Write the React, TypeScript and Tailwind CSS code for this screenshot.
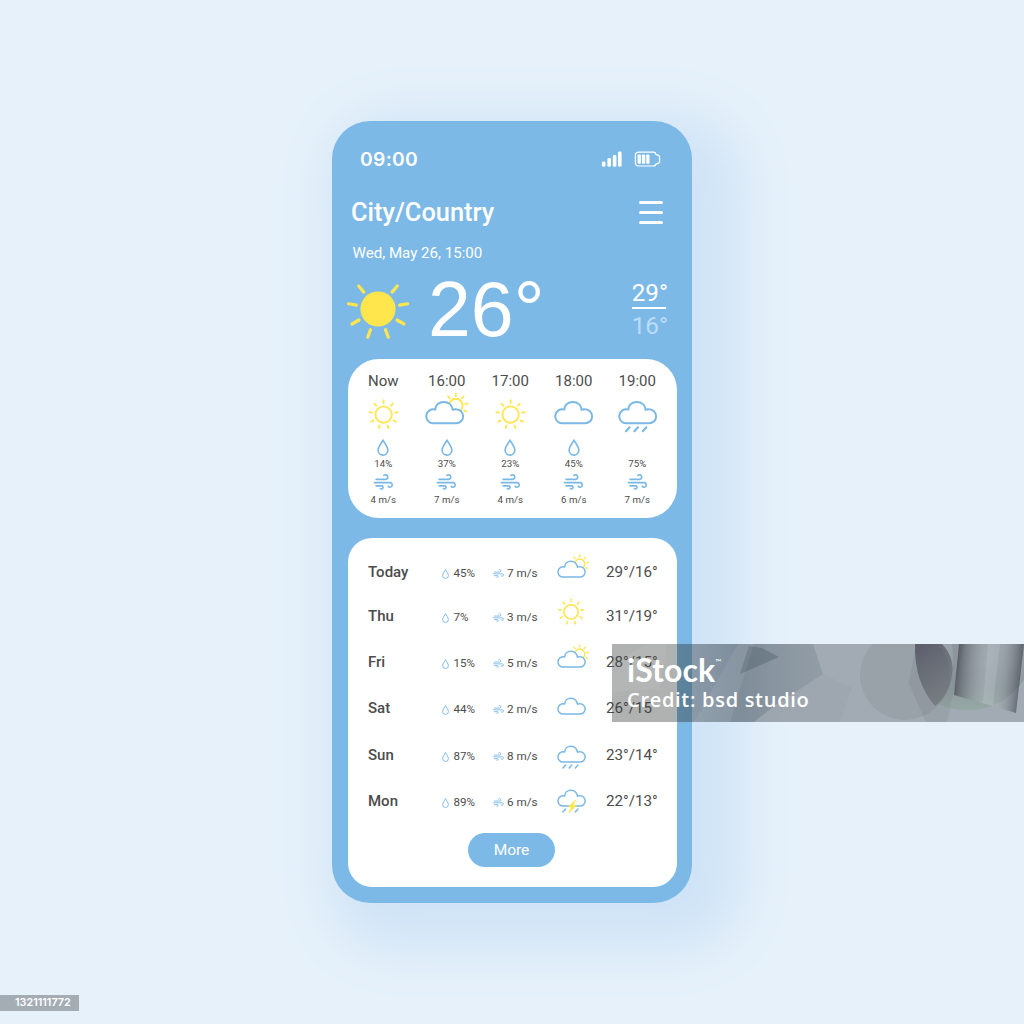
import React from "react";

const BLUE = "#7ab8e6";
const YELLOW = "#ffe64d";

type Weather = "sun" | "partly" | "cloud" | "rain" | "storm";

const CLOUD =
  "M8.6 23.3A7 7 0 1 1 10.3 9.6C10.4 5 14 1.9 18.9 1.9C23.6 1.9 27.4 5.2 27.6 9.8C28.8 9.2 30 9.2 31.2 9.3A7 7 0 0 1 31 23.3Z";

function Rays({ cx, cy, from, to, width, skipTop = false }: { cx: number; cy: number; from: number; to: number; width: number; skipTop?: boolean }) {
  const angles = [0, 40, 80, 120, 160, 200, 240, 280, 320].filter((a) => !(skipTop && a === 0));
  return (
    <g stroke={YELLOW} strokeWidth={width} strokeLinecap="round">
      {angles.map((a) => (
        <line key={a} x1={cx} y1={cy - from} x2={cx} y2={cy - to} transform={`rotate(${a} ${cx} ${cy})`} />
      ))}
    </g>
  );
}

function WeatherIcon({ type, className }: { type: Weather; className: string }) {
  return (
    <svg viewBox="0 -8 46 42" className={className} fill="none" strokeLinecap="round" strokeLinejoin="round">
      {type === "sun" && (
        <>
          <circle cx="19.6" cy="14.6" r="8.2" stroke={YELLOW} strokeWidth="1.9" />
          <Rays cx={19.6} cy={14.6} from={11.6} to={14.4} width={1.8} />
        </>
      )}
      {type === "partly" && (
        <>
          <circle cx="30.8" cy="5.6" r="6.8" stroke={YELLOW} strokeWidth="1.9" />
          <Rays cx={30.8} cy={5.6} from={9.6} to={12} width={1.8} />
        </>
      )}
      {type !== "sun" && <path d={CLOUD} fill="#fff" stroke={BLUE} strokeWidth="2" />}
      {(type === "rain" || type === "storm") && (
        <g stroke={BLUE} strokeWidth="2.1">
          <path d="M11.6 27.3L8 31.2" />
          {type === "rain" && <path d="M20 27.3L16.4 31.2" />}
          <path d="M28.4 27.3L24.8 31.2" />
        </g>
      )}
      {type === "storm" && <path d="M24.5 15.5L15.6 24.4H19.6L16 32.5L26.2 22.2H22Z" fill={YELLOW} stroke={YELLOW} strokeWidth="1" />}
    </svg>
  );
}

function Drop({ className }: { className: string }) {
  return (
    <svg viewBox="0 0 11 16" className={className} fill="none" stroke={BLUE} strokeWidth="1.5" strokeLinejoin="round">
      <path d="M5.5 .9C4.5 3.5 .9 7.2 .9 10.6a4.6 4.6 0 0 0 9.2 0C10.1 7.2 6.5 3.5 5.5 .9Z" />
    </svg>
  );
}

function Wind({ className }: { className: string }) {
  return (
    <svg viewBox="0 0 20 16" className={className} fill="none" stroke={BLUE} strokeWidth="1.6" strokeLinecap="round">
      <path d="M2.6 5.4H12.2A2.3 2.3 0 1 0 10.4 1.4" />
      <path d="M.9 8.6H16.8A2.3 2.3 0 1 1 14.6 12.3" />
      <path d="M2.6 11.9H8.8A1.7 1.7 0 1 1 6.8 14.7" />
    </svg>
  );
}

const hours: { time: string; icon: Weather; humidity: string; wind: string; drop: boolean; offset: string }[] = [
  { time: "Now", icon: "sun", humidity: "14%", wind: "4 m/s", drop: true, offset: "ml-[7px]" },
  { time: "16:00", icon: "partly", humidity: "37%", wind: "7 m/s", drop: true, offset: "ml-[3px]" },
  { time: "17:00", icon: "sun", humidity: "23%", wind: "4 m/s", drop: true, offset: "ml-[7px]" },
  { time: "18:00", icon: "cloud", humidity: "45%", wind: "6 m/s", drop: true, offset: "ml-[7px]" },
  { time: "19:00", icon: "rain", humidity: "75%", wind: "7 m/s", drop: false, offset: "ml-[7px]" },
];

const days: { day: string; humidity: string; wind: string; icon: Weather; temps: string; row: string; iconBox: string }[] = [
  { day: "Today", humidity: "45%", wind: "7 m/s", icon: "partly", temps: "29°/16°", row: "h-[44px]", iconBox: "h-[31px] w-[34px] mb-[5px]" },
  { day: "Thu", humidity: "7%", wind: "3 m/s", icon: "sun", temps: "31°/19°", row: "h-[44px]", iconBox: "h-[37px] w-[40px] -ml-[3px] -mt-[3px] mb-[8px]" },
  { day: "Fri", humidity: "15%", wind: "5 m/s", icon: "partly", temps: "28°/15°", row: "h-[48px]", iconBox: "h-[31px] w-[34px] mb-[6px]" },
  { day: "Sat", humidity: "44%", wind: "2 m/s", icon: "cloud", temps: "26°/15", row: "h-[44px]", iconBox: "h-[31px] w-[34px] mb-[4px]" },
  { day: "Sun", humidity: "87%", wind: "8 m/s", icon: "rain", temps: "23°/14°", row: "h-[50px]", iconBox: "h-[31px] w-[34px] mb-[1px]" },
  { day: "Mon", humidity: "89%", wind: "6 m/s", icon: "storm", temps: "22°/13°", row: "h-[42px]", iconBox: "h-[31px] w-[34px] mb-[6px]" },
];

function StatusBar() {
  return (
    <div className="flex h-[20px] items-center justify-between pl-[28px] pr-[31px]">
      <span className="font-['Inter',sans-serif] text-[19.3px] font-semibold leading-[21px] tracking-[0.3px]">09:00</span>
      <div className="flex items-center gap-[12px]">
        <svg viewBox="0 0 21 16" className="h-[16px] w-[21px]" fill="#fff">
          <rect x="0.9" y="10.5" width="3.6" height="5.2" rx="1.4" />
          <rect x="6.4" y="7" width="3.6" height="8.7" rx="1.4" />
          <rect x="11.8" y="4" width="3.6" height="11.7" rx="1.4" />
          <rect x="17" y="0.5" width="3.6" height="15.2" rx="1.4" />
        </svg>
        <svg viewBox="0 0 27 16" className="h-[16px] w-[27px]" fill="none" stroke="#fff" strokeWidth="1.2" strokeLinejoin="round">
          <path d="M4.6 1.2H19.4Q21.6 1.2 22 3.6Q25.6 4 25.6 6V10.4Q25.6 12.4 22 12.8Q21.6 15 19.4 15H4.6Q1.4 15 1.4 11.8V4.4Q1.4 1.2 4.6 1.2Z" />
          <g fill="#fff" stroke="none">
            <rect x="3.6" y="3.4" width="3.3" height="9.4" rx="0.8" />
            <rect x="7.9" y="3.4" width="3.3" height="9.4" rx="0.8" />
            <rect x="12.2" y="3.4" width="3.3" height="9.4" rx="0.8" />
          </g>
        </svg>
      </div>
    </div>
  );
}

function Watermark() {
  return (
    <div className="absolute left-[612px] top-[644px] h-[78px] w-[412px] overflow-hidden bg-[#10131a]/30">
      <svg viewBox="0 0 412 78" className="absolute inset-0 h-full w-full">
        <defs>
          <linearGradient id="sheen" x1="0" x2="1">
            <stop offset="0" stopColor="#1b3440" stopOpacity=".05" />
            <stop offset=".45" stopColor="#1b3440" stopOpacity=".22" />
            <stop offset="1" stopColor="#1b3440" stopOpacity=".12" />
          </linearGradient>
          <linearGradient id="prism" x1="0" x2="1" y1="0" y2=".1">
            <stop offset="0" stopColor="#15161d" stopOpacity=".6" />
            <stop offset=".5" stopColor="#c9d3d2" stopOpacity=".2" />
            <stop offset=".7" stopColor="#a9b3b2" stopOpacity=".2" />
            <stop offset="1" stopColor="#15161d" stopOpacity=".45" />
          </linearGradient>
          <linearGradient id="disc" x1="0" x2=".4" y1="0" y2="1">
            <stop offset="0" stopColor="#262438" stopOpacity=".5" />
            <stop offset="1" stopColor="#44474a" stopOpacity=".35" />
          </linearGradient>
          <linearGradient id="green" x1="0" x2="0" y1="0" y2="1">
            <stop offset=".3" stopColor="#1e2036" stopOpacity=".15" />
            <stop offset="1" stopColor="#7fa888" stopOpacity=".55" />
          </linearGradient>
        </defs>
        <path d="M0 0H80V78H0Z" fill="#8a8f80" opacity=".14" />
        <path d="M80 0H412V78H80Z" fill="#8088a0" opacity=".08" />
        <path d="M65 0H201L211 30L165 60L142 78H65Z" fill="url(#sheen)" />
        <path d="M128 30L167 13L150 4L137 2Z" fill="#132734" opacity=".2" />
        <path d="M118 78L142 0H126L82 78Z" fill="#fff" opacity=".07" />
        <path d="M0 20L35 0H55L48 45L0 48Z" fill="#fff" opacity=".05" />
        <path d="M211 30L240 44L228 78H142L165 60Z" fill="#445" opacity=".04" />
        <circle cx="293" cy="31" r="45" fill="#333" opacity=".08" />
        <path d="M304 0L297 40L314 78H335L352 0Z" fill="#333" opacity=".08" />
        <path d="M303 0H330Q343 14 340 30Q338 50 323 62Q302 38 303 0Z" fill="url(#disc)" />
        <path d="M340 0H412V36A68 68 0 0 1 326 60Q344 40 340 0Z" fill="url(#green)" opacity=".6" />
        <path d="M347 0H412L404 69L342 51Z" fill="url(#prism)" />
        <path d="M376 0H388L381 62L371 59Z" fill="#eef5f3" opacity=".12" />
      </svg>
      <div className="relative flex flex-col pl-[15px] pt-[9px] text-white">
        <div className="flex h-[34px] items-start">
          <span className="font-['Lato',sans-serif] text-[32px] font-bold leading-[34px] tracking-[0.1px]">iStock</span>
          <span className="mt-[5px] font-['Lato',sans-serif] text-[8px] leading-[8px]">™</span>
        </div>
        <span className="whitespace-nowrap font-['Open_Sans',sans-serif] text-[20px] font-semibold leading-[26px] tracking-[0.7px]">Credit: bsd studio</span>
      </div>
    </div>
  );
}

export default function App() {
  return (
    <div className="relative h-[1024px] w-[1024px] overflow-hidden bg-[#e6f1fa] pt-[121px] font-['Roboto',sans-serif]">
      <main className="mx-auto flex h-[782px] w-[360px] flex-col rounded-[38px] bg-[#7cb9e7] pt-[28px] text-white shadow-[24px_20px_50px_26px_#d0e4f7]">
        <StatusBar />

        <header className="mt-[26px] flex h-[34px] items-center justify-between pl-[19px] pr-[29px]">
          <h1 className="pb-px text-[25.4px] font-medium leading-[32px]">City/Country</h1>
          <div className="flex flex-col gap-[7px] pt-[1px]">
            <span className="h-[3px] w-[24px] rounded-full bg-white" />
            <span className="h-[3px] w-[24px] rounded-full bg-white" />
            <span className="h-[3px] w-[24px] rounded-full bg-white" />
          </div>
        </header>

        <p className="mt-[14px] h-[20px] pl-[20.5px] text-[15.1px] leading-[21px]">Wed, May 26, 15:00</p>

        <section className="mt-[11px] flex h-[68px] pl-[14px] pr-[24px]">
          <svg viewBox="-32 -32 64 64" className="mt-[3px] h-[64px] w-[64px]">
            <circle r="17.6" fill={YELLOW} />
            <Rays cx={0} cy={0} from={22} to={30} width={3.2} skipTop />
          </svg>
          <span className="ml-[18px] font-['Liberation_Sans',sans-serif] text-[77px] leading-[70px]">26°</span>
          <div className="ml-auto flex flex-col pt-[6px] text-[24.2px] leading-[26px]">
            <span>29°</span>
            <span className="mb-[4px] mt-px h-[2px] w-[34px] bg-white" />
            <span className="text-[#bddcf7]">16°</span>
          </div>
        </section>

        <section className="mx-auto mt-[17px] grid h-[159px] w-[329px] grid-cols-[repeat(5,63.5px)] rounded-[31px] bg-white pl-[4px] pt-[12px] text-[#4c4c4c]">
          {hours.map((h) => (
            <div key={h.time} className="flex flex-col items-center">
              <span className="h-[20px] text-[15px] leading-[20px]">{h.time}</span>
              <WeatherIcon type={h.icon} className={`mt-px h-[42px] w-[46px] ${h.offset}`} />
              <div className="mt-[5px] h-[16px]">{h.drop && <Drop className="h-[17px] w-[12px]" />}</div>
              <span className="mt-[3px] h-[12px] text-[9.7px] leading-[12px]">{h.humidity}</span>
              <Wind className="mt-[4px] h-[16px] w-[21px]" />
              <span className="mt-[4px] h-[12px] text-[9.7px] leading-[12px]">{h.wind}</span>
            </div>
          ))}
        </section>

        <section className="mx-auto mt-[20px] flex h-[349px] w-[329px] flex-col rounded-[24px] bg-white pl-[20.5px] pt-[12px] text-[#4c4c4c]">
          {days.map((d) => (
            <div key={d.day} className={`grid grid-cols-[74px_51px_64px_49px_60px] items-center ${d.row}`}>
              <span className="text-[15px] font-medium">{d.day}</span>
              <span className="flex items-center gap-[4.5px] pt-[4px] text-[11.6px]">
                <Drop className="h-[10px] w-[7px]" />
                {d.humidity}
              </span>
              <span className="flex items-center gap-[3px] whitespace-nowrap pt-[4px] text-[11.7px]">
                <Wind className="h-[9px] w-[11px]" />
                {d.wind}
              </span>
              <WeatherIcon type={d.icon} className={d.iconBox} />
              <span className="text-[15.2px]">{d.temps}</span>
            </div>
          ))}
          <button className="ml-[100px] mt-[11px] h-[34px] w-[87px] rounded-full bg-[#7cb9e7] pt-px text-[15.5px] text-white">More</button>
        </section>
      </main>

      <Watermark />

      <div className="absolute left-0 top-[995px] flex h-[16px] w-[79px] items-center bg-[#a4adb4] pl-[15px] font-['Inter',sans-serif] text-[10.8px] font-semibold text-white">
        1321111772
      </div>
    </div>
  );
}
